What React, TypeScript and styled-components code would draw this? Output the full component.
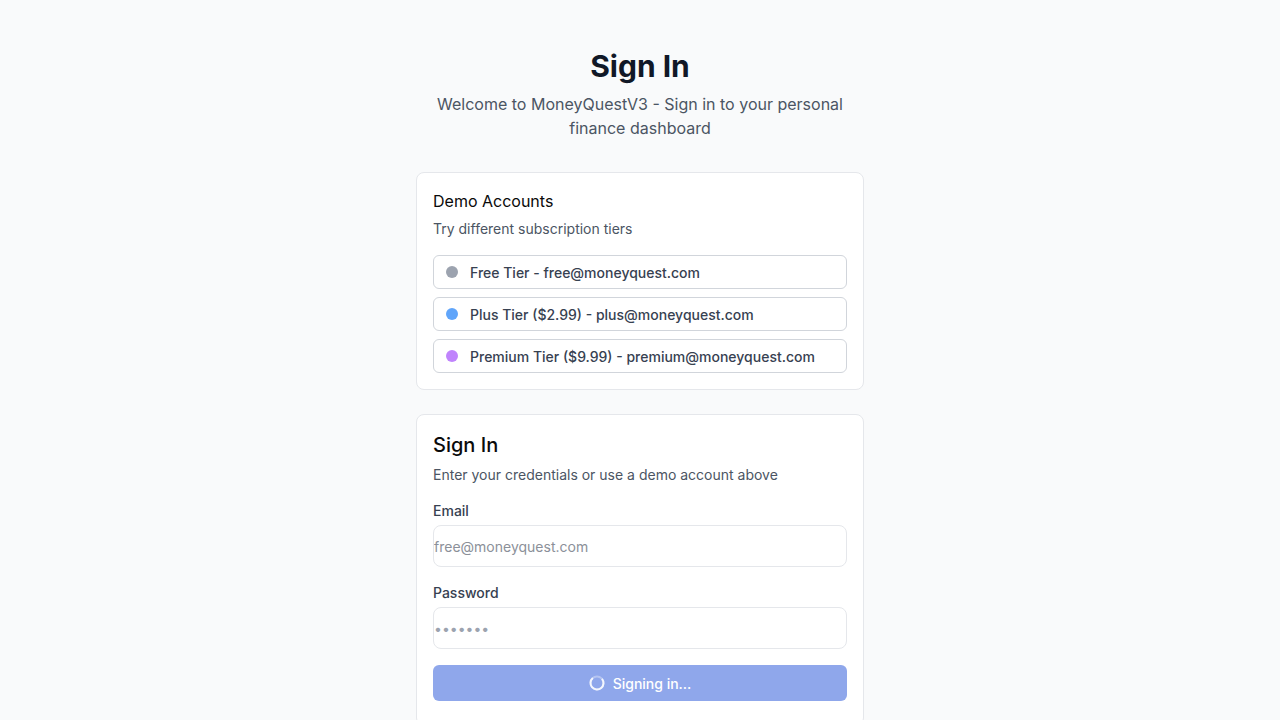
import React from "react";
import styled, { createGlobalStyle } from "styled-components";

const Global = createGlobalStyle`
  html, body { margin: 0; padding: 0; background: #f9fafb; }
  body { font-family: Inter, "Noto Sans", sans-serif; color: #111827; -webkit-font-smoothing: antialiased; }
  * { box-sizing: border-box; }
`;

const Page = styled.div`
  min-height: 720px;
  display: flex;
  justify-content: center;
  padding: 48px 0;
`;

const Column = styled.div`
  width: 448px;
  display: flex;
  flex-direction: column;
`;

const Header = styled.div`
  display: flex;
  flex-direction: column;
  align-items: center;
  text-align: center;
  gap: 8px;
  margin-bottom: 32px;
`;

const Title = styled.h1`
  margin: 0;
  font-size: 30px;
  line-height: 36px;
  font-weight: 700;
  color: #111827;
`;

const Subtitle = styled.p`
  margin: 0;
  font-size: 16px;
  line-height: 24px;
  color: #4b5563;
  max-width: 420px;
`;

const Card = styled.section<{ $gapAfter?: number; $padBottom?: number }>`
  background: #fff;
  border: 1px solid #e5e7eb;
  border-radius: 8px;
  padding: 16px 16px ${(p) => p.$padBottom ?? 16}px;
  margin-bottom: ${(p) => p.$gapAfter ?? 0}px;
  display: flex;
  flex-direction: column;
`;

const CardTitle = styled.h2<{ $size: number; $lh: number; $weight: number }>`
  margin: 0;
  font-size: ${(p) => p.$size}px;
  line-height: ${(p) => p.$lh}px;
  font-weight: ${(p) => p.$weight};
  color: #0a0a0a;
`;

const CardDesc = styled.p`
  margin: 6px 0 16px;
  font-size: 14px;
  line-height: 20px;
  color: #4b5563;
`;

const AccountList = styled.div`
  display: flex;
  flex-direction: column;
  gap: 8px;
`;

const AccountButton = styled.button`
  display: flex;
  align-items: center;
  gap: 12px;
  height: 34px;
  padding: 0 12px;
  background: #fff;
  border: 1px solid #d1d5db;
  border-radius: 6px;
  font-family: inherit;
  font-size: 14px;
  font-weight: 500;
  color: #374151;
  text-align: left;
  cursor: pointer;
`;

const Dot = styled.span<{ $color: string }>`
  width: 12px;
  height: 12px;
  border-radius: 50%;
  background: ${(p) => p.$color};
  flex-shrink: 0;
`;

const Form = styled.form`
  display: flex;
  flex-direction: column;
`;

const Field = styled.div`
  display: flex;
  flex-direction: column;
  gap: 4px;
  margin-bottom: 16px;
`;

const Label = styled.label`
  font-size: 14px;
  line-height: 20px;
  font-weight: 500;
  color: #374151;
`;

const Input = styled.input`
  height: 42px;
  width: 100%;
  border: 1px solid #e5e7eb;
  border-radius: 8px;
  padding: 0;
  font-family: inherit;
  font-size: 14px;
  color: #9ca3af;
  background: #fff;
  outline: none;
  &::placeholder { color: #8b9099; }
`;

const Submit = styled.button`
  height: 36px;
  border: none;
  border-radius: 6px;
  background: #8fa7eb;
  color: #fff;
  font-family: inherit;
  font-size: 14px;
  font-weight: 500;
  display: flex;
  align-items: center;
  justify-content: center;
  gap: 8px;
`;

const Spinner = () => (
  <svg width="16" height="16" viewBox="0 0 16 16" fill="none">
    <circle cx="8" cy="8" r="6.5" stroke="rgba(255,255,255,0.35)" strokeWidth="2" />
    <path d="M8 1.5 A6.5 6.5 0 1 0 14.5 8" stroke="rgba(255,255,255,0.85)" strokeWidth="2" transform="rotate(-40 8 8)" />
  </svg>
);

const accounts = [
  { color: "#9ca3af", label: "Free Tier - free@moneyquest.com" },
  { color: "#60a5fa", label: "Plus Tier ($2.99) - plus@moneyquest.com" },
  { color: "#c084fc", label: "Premium Tier ($9.99) - premium@moneyquest.com" },
];

export default function App() {
  return (
    <>
      <Global />
      <Page>
        <Column>
          <Header>
            <Title>Sign In</Title>
            <Subtitle>Welcome to MoneyQuestV3 - Sign in to your personal finance dashboard</Subtitle>
          </Header>
          <Card $gapAfter={24}>
            <CardTitle $size={16} $lh={24} $weight={400}>Demo Accounts</CardTitle>
            <CardDesc>Try different subscription tiers</CardDesc>
            <AccountList>
              {accounts.map((a) => (
                <AccountButton key={a.label} type="button">
                  <Dot $color={a.color} />
                  {a.label}
                </AccountButton>
              ))}
            </AccountList>
          </Card>
          <Card $padBottom={24}>
            <CardTitle $size={20} $lh={28} $weight={500}>Sign In</CardTitle>
            <CardDesc>Enter your credentials or use a demo account above</CardDesc>
            <Form onSubmit={(e) => e.preventDefault()}>
              <Field>
                <Label>Email</Label>
                <Input type="email" placeholder="free@moneyquest.com" />
              </Field>
              <Field>
                <Label>Password</Label>
                <Input type="password" defaultValue="freedom" />
              </Field>
              <Submit type="submit" disabled>
                <Spinner />
                Signing in...
              </Submit>
            </Form>
          </Card>
        </Column>
      </Page>
    </>
  );
}
